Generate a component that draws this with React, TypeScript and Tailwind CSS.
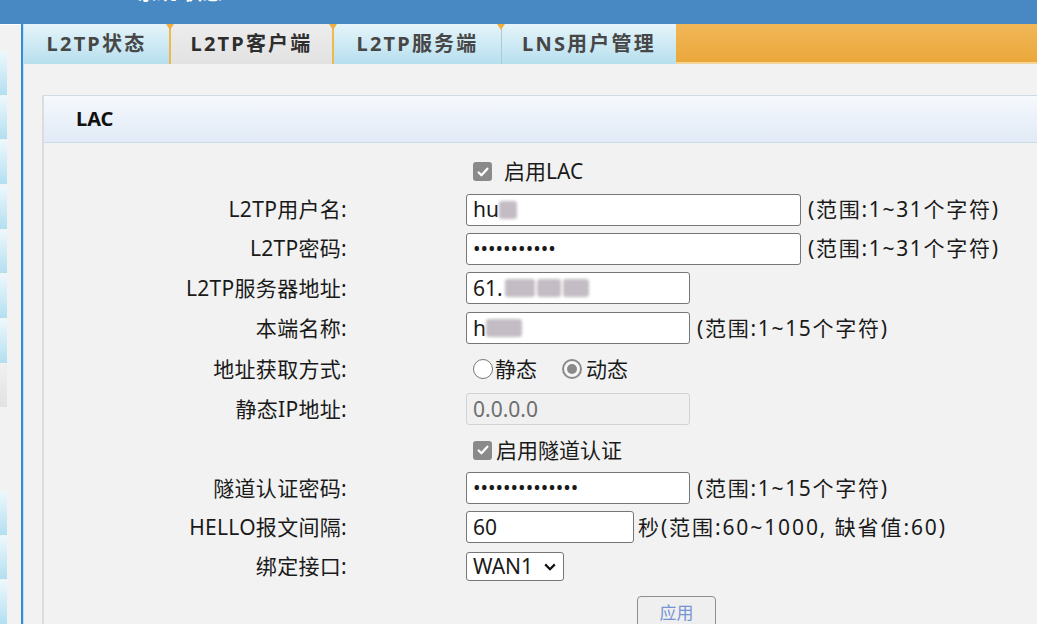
import React from "react";

function Check() {
  return (
    <span className="flex h-[19px] w-[19px] shrink-0 items-center justify-center rounded-[3px] bg-[#8a8a8a]">
      <svg viewBox="0 0 16 16" className="h-[14px] w-[14px]">
        <path d="M3 8.5l3.2 3.2L13 4.2" fill="none" stroke="white" strokeWidth="2.6" strokeLinecap="round" strokeLinejoin="round" />
      </svg>
    </span>
  );
}

function Row({ label, h, children }: { label?: string; h: string; children?: React.ReactNode }) {
  return (
    <div className={"flex items-center " + h}>
      <div className="w-[303px] shrink-0 text-right tracking-[0.3px]">{label}</div>
      <div className="ml-[119px] flex items-center">{children}</div>
    </div>
  );
}

function Box({ w, children, disabled }: { w: string; children?: React.ReactNode; disabled?: boolean }) {
  return (
    <div
      className={
        "flex h-[32px] items-center rounded-[3px] border px-[6px] " +
        w +
        (disabled ? " border-[#d2d2d2] bg-[#f0f0f0] text-[#6e6e6e]" : " border-[#767676] bg-white text-[#1a1a1a]")
      }
    >
      {children}
    </div>
  );
}

function Blur({ w }: { w: string }) {
  return <span className={"inline-block h-[18px] rounded-[3px] bg-[#c4bcc4] blur-[1.5px] " + w} />;
}

export default function App() {
  const tabs = [
    { t: "L2TP状态", w: "w-[145px]", active: false },
    { t: "L2TP客户端", w: "w-[165px]", active: true },
    { t: "L2TP服务端", w: "w-[167px]", active: false },
    { t: "LNS用户管理", w: "w-[175px]", active: false },
  ];
  return (
    <div className="flex h-[624px] w-[1037px] flex-col overflow-hidden bg-[#f2f2f2] font-['Noto_Sans','Noto_Sans_CJK_SC',sans-serif] text-[21px] text-[#1a1a1a]">
      {/* top blue bar */}
      <div className="h-[24px] shrink-0 overflow-hidden bg-[#4889c3]">
        <div className="ml-[137px] mt-[-17px] text-[20px] font-bold leading-[20px] text-white">系统 状态</div>
      </div>
      <div className="flex min-h-0 flex-1">
        {/* sidebar */}
        <div className="flex w-[21px] shrink-0 flex-col gap-[1px] border-t border-white bg-[#f2f2f2] pt-[26px]">
          <div className="h-[44px] w-[7px] bg-gradient-to-b from-[#eef8fc] to-[#b2dff0]" />
          <div className="h-[44px] w-[7px] bg-gradient-to-b from-[#eef8fc] to-[#b2dff0]" />
          <div className="h-[44px] w-[7px] bg-gradient-to-b from-[#eef8fc] to-[#b2dff0]" />
          <div className="h-[44px] w-[7px] bg-gradient-to-b from-[#eef8fc] to-[#b2dff0]" />
          <div className="h-[44px] w-[7px] bg-gradient-to-b from-[#eef8fc] to-[#b2dff0]" />
          <div className="h-[44px] w-[7px] bg-gradient-to-b from-[#eef8fc] to-[#b2dff0]" />
          <div className="h-[44px] w-[7px] bg-gradient-to-b from-[#eef8fc] to-[#b2dff0]" />
          <div className="h-[43px] w-[7px] bg-gradient-to-b from-[#f0f0f0] to-[#e2e2e2]" />
          <div className="h-[83px] w-[7px]" />
          <div className="h-[44px] w-[7px] bg-gradient-to-b from-[#eef8fc] to-[#b2dff0]" />
          <div className="h-[44px] w-[7px] bg-gradient-to-b from-[#eef8fc] to-[#b2dff0]" />
          <div className="h-[44px] w-[7px] bg-gradient-to-b from-[#eef8fc] to-[#b2dff0]" />
        </div>
        {/* separator */}
        <div className="w-[2px] shrink-0 bg-[#3a8ad2]" />
        <div className="w-[1px] shrink-0 bg-[#b5e6f8]" />
        {/* main */}
        <div className="flex min-w-0 flex-1 flex-col">
          {/* tabs */}
          <div className="flex h-[40px] shrink-0">
            {tabs.map((tb, i) => (
              <div
                key={tb.t}
                className={
                  "relative flex h-full shrink-0 items-center justify-center text-[20px] font-bold tracking-[2.2px] " +
                  tb.w +
                  (tb.active
                    ? " border-x-2 border-[#efb84a] bg-gradient-to-b from-[#ededed] to-[#e2e2e2] text-[#2e2e2e]"
                    : " bg-gradient-to-b from-[#e6f4fa] to-[#b6dfee] text-[#474747]") +
                  (i === 3 ? " rounded-tr-[4px] border-l border-[#a9cbd8]" : "")
                }
              >
                {tb.t}
                {i > 0 && (
                  <span className="absolute left-[-5px] top-0 h-0 w-0 border-x-[4px] border-t-[6px] border-x-transparent border-t-[#f0b040]" />
                )}
              </div>
            ))}
            <div className="flex-1 border-b-2 border-[#f6d598] bg-gradient-to-b from-[#f1b758] to-[#eba83a]" />
          </div>
          {/* content */}
          <div className="min-h-0 flex-1 pl-[18px] pt-[31px]">
            <div className="h-full border-l-2 border-[#dcdcdc]">
              <div className="flex h-[48px] items-center border-y border-[#cddbe8] bg-gradient-to-b from-[#f6f9fd] to-[#e1eaf6] pl-[32px] text-[20px] font-bold text-[#111]">
                LAC
              </div>
              <div className="flex flex-col pt-[10px] leading-none">
                <Row h="h-[37px]">
                  <span className="ml-[7px]"><Check /></span>
                  <span className="ml-[12px]">启用LAC</span>
                </Row>
                <Row label="L2TP用户名:" h="h-[39px]">
                  <Box w="w-[335px]">
                    hu<Blur w="w-[18px]" />
                  </Box>
                  <span className="ml-[7px] tracking-[1.7px]">(范围:1~31个字符)</span>
                </Row>
                <Row label="L2TP密码:" h="h-[39px]">
                  <Box w="w-[335px]">
                    <span className="text-[20px]">•••••••••••</span>
                  </Box>
                  <span className="ml-[7px] tracking-[1.7px]">(范围:1~31个字符)</span>
                </Row>
                <Row label="L2TP服务器地址:" h="h-[40px]">
                  <Box w="w-[224px]">
                    61.<span className="ml-[2px] flex gap-[2px]"><Blur w="w-[30px]" /><Blur w="w-[24px]" /><Blur w="w-[26px]" /></span>
                  </Box>
                </Row>
                <Row label="本端名称:" h="h-[40px]">
                  <Box w="w-[224px]">
                    h<Blur w="w-[36px]" />
                  </Box>
                  <span className="ml-[7px] tracking-[1.7px]">(范围:1~15个字符)</span>
                </Row>
                <Row label="地址获取方式:" h="h-[42px]">
                  <span className="ml-[7px] h-[20px] w-[20px] rounded-full border border-[#777] bg-white" />
                  <span className="ml-[2px]">静态</span>
                  <span className="ml-[25px] flex h-[20px] w-[20px] items-center justify-center rounded-full border-2 border-[#8a8a8a] bg-[#f6f6f6]">
                    <span className="h-[10px] w-[10px] rounded-full bg-[#8a8a8a]" />
                  </span>
                  <span className="ml-[4px]">动态</span>
                </Row>
                <Row label="静态IP地址:" h="h-[38px]">
                  <Box w="w-[224px]" disabled>
                    0.0.0.0
                  </Box>
                </Row>
                <Row h="h-[44px]">
                  <span className="ml-[7px]"><Check /></span>
                  <span className="ml-[4px]">启用隧道认证</span>
                </Row>
                <Row label="隧道认证密码:" h="h-[32px]">
                  <Box w="w-[224px]">
                    <span className="text-[20px]">••••••••••••••</span>
                  </Box>
                  <span className="ml-[7px] tracking-[1.7px]">(范围:1~15个字符)</span>
                </Row>
                <Row label="HELLO报文间隔:" h="h-[46px]">
                  <Box w="w-[168px]">60</Box>
                  <span className="ml-[4px] tracking-[1.9px]">秒(范围:60~1000, 缺省值:60)</span>
                </Row>
                <Row label="绑定接口:" h="h-[33px]">
                  <div className="flex h-[29px] w-[98px] items-center justify-between rounded-[3px] border border-[#767676] bg-white pl-[6px] pr-[6px]">
                    <span>WAN1</span>
                    <svg viewBox="0 0 16 16" className="h-[14px] w-[14px]">
                      <path d="M2.5 5l5.5 5.5L13.5 5" fill="none" stroke="#111" strokeWidth="2.6" />
                    </svg>
                  </div>
                </Row>
                <div className="mt-[13px] flex pl-[593px]">
                  <div className="flex h-[32px] w-[79px] items-center justify-center rounded-[4px] border border-[#8f8f8f] bg-[#efefef] text-[17px] text-[#7494d4]">
                    应用
                  </div>
                </div>
              </div>
            </div>
          </div>
        </div>
      </div>
    </div>
  );
}
